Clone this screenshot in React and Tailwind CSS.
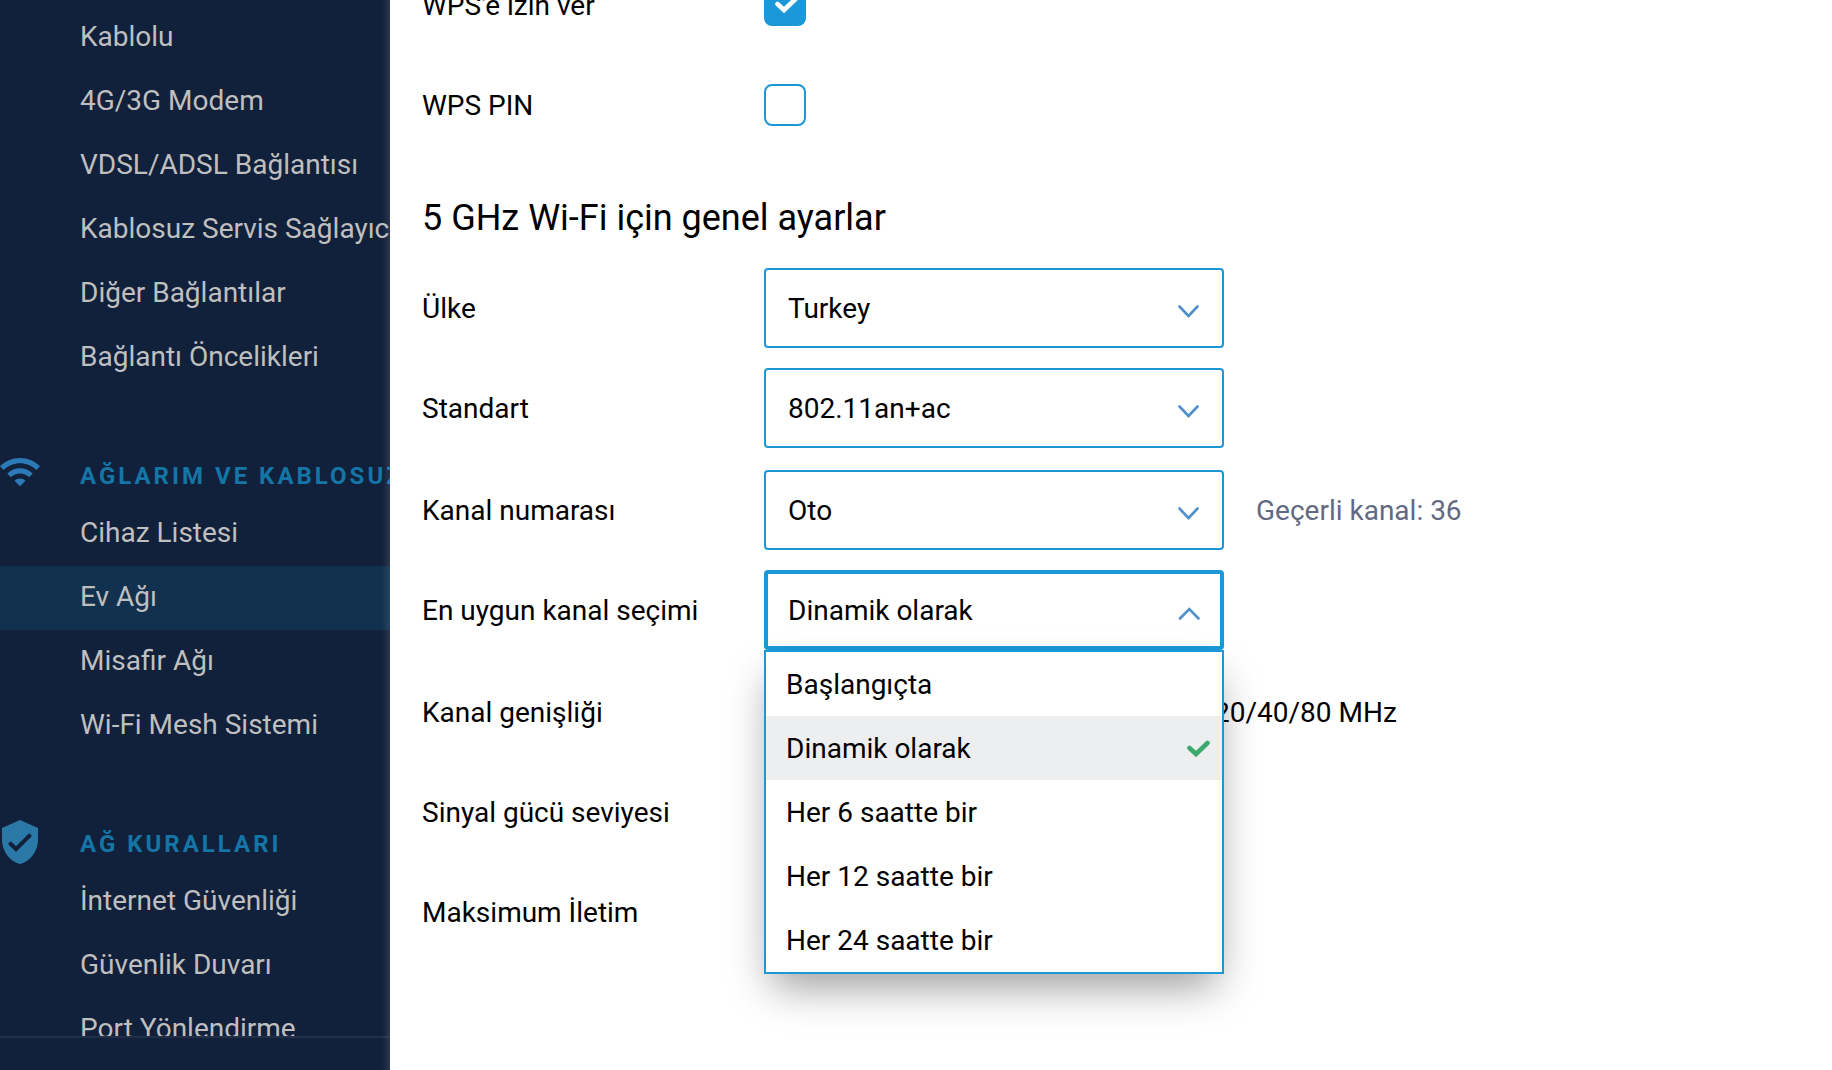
import React, { useState } from 'react';

const navSections = [
  {
    items: [
      'Kablolu',
      '4G/3G Modem',
      'VDSL/ADSL Bağlantısı',
      'Kablosuz Servis Sağlayıcı',
      'Diğer Bağlantılar',
      'Bağlantı Öncelikleri',
    ],
  },
  {
    title: 'AĞLARIM VE KABLOSUZ',
    icon: 'wifi',
    items: ['Cihaz Listesi', 'Ev Ağı', 'Misafir Ağı', 'Wi-Fi Mesh Sistemi'],
  },
  {
    title: 'AĞ KURALLARI',
    icon: 'shield',
    items: ['İnternet Güvenliği', 'Güvenlik Duvarı', 'Port Yönlendirme'],
  },
];

const channelOptions = [
  'Başlangıçta',
  'Dinamik olarak',
  'Her 6 saatte bir',
  'Her 12 saatte bir',
  'Her 24 saatte bir',
];

const WifiIcon = () => (
  <svg viewBox="1 4 22 19" className="w-10 h-[35px] text-[#2d7ab8]" fill="currentColor" aria-hidden="true">
    <path d="M1 9l2 2c4.97-4.97 13.03-4.97 18 0l2-2C16.93 2.93 7.08 2.93 1 9zm8 8l3 3 3-3c-1.65-1.66-4.34-1.66-6 0zm-4-4l2 2c2.76-2.76 7.24-2.76 10 0l2-2C15.14 9.14 8.87 9.14 5 13z" />
  </svg>
);

const ShieldIcon = () => (
  <svg viewBox="2 1 20 22" className="w-10 h-11 text-[#2a78a6]" fill="currentColor" aria-hidden="true">
    <path d="M12 1L3 5v6c0 5.55 3.84 10.74 9 12 5.16-1.26 9-6.45 9-12V5l-9-4zm-2 16l-4-4 1.41-1.41L10 14.17l6.59-6.59L18 9l-8 8z" />
  </svg>
);

const Chevron = ({ up }) => (
  <svg
    viewBox="0 0 22 14"
    className="absolute right-6 top-9 w-[22px] h-[14px] pointer-events-none"
    fill="none"
    stroke="#4f90cb"
    strokeWidth="2.6"
    strokeLinecap="round"
    aria-hidden="true"
  >
    <path d={up ? 'M2 12.5L11.300 3L20.500 12.5' : 'M1.500 2.500L10.500 12L19.500 2.500'} />
  </svg>
);

const CheckMark = ({ className }) => (
  <svg viewBox="0 0 24 18" className={className} fill="none" stroke="currentColor" strokeWidth="4.6" strokeLinecap="round" aria-hidden="true">
    <path d="M3.500 8L10 14L21.500 3" />
  </svg>
);

const Sidebar = () => (
  <aside className="relative flex flex-col w-[390px] shrink-0 overflow-hidden bg-[#12213b] text-[#bfbfbf]">
    <nav className="flex-1 min-h-0 overflow-hidden pt-1.5">
      {navSections.map((section) => (
        <section key={section.items[0]}>
          {section.title && (
            <div className="flex items-center h-28 pt-14">
              <div className="w-20 shrink-0">
                {section.icon === 'wifi' ? <WifiIcon /> : <ShieldIcon />}
              </div>
              <h3 className="text-2xl font-bold tracking-[3px] whitespace-nowrap text-[#1475a6] pt-1">
                {section.title}
              </h3>
            </div>
          )}
          <ul>
            {section.items.map((item) => (
              <li key={item}>
                <a
                  href="#"
                  className={`block h-16 pl-20 leading-[62px] whitespace-nowrap ${item === 'Ev Ağı' ? 'bg-[#11314f]' : ''}`}
                >
                  {item}
                </a>
              </li>
            ))}
          </ul>
        </section>
      ))}
    </nav>
    <div className="h-[34px] shrink-0 border-t-2 border-[#232f47]" />
    <div className="absolute inset-y-0 right-0 w-2 bg-linear-to-r from-transparent to-white/10 pointer-events-none" />
  </aside>
);

const Row = ({ label, id, children }) => (
  <div className="flex items-center h-[100px]">
    <label htmlFor={id} className="w-[342px] shrink-0 pt-0.5">
      {label}
    </label>
    {children}
  </div>
);

const Checkbox = ({ id, defaultChecked }) => (
  <div className="relative w-[42px] h-[42px]">
    <input
      id={id}
      type="checkbox"
      defaultChecked={defaultChecked}
      className="peer block w-[42px] h-[42px] appearance-none rounded-lg border-2 border-[#1a98d8] bg-white checked:bg-[#1a98d8]"
    />
    <CheckMark className="absolute top-3 left-2.5 w-6 h-[18px] text-white hidden peer-checked:block pointer-events-none" />
  </div>
);

const Select = ({ id, value }) => (
  <div className="relative w-[460px]">
    <select
      id={id}
      defaultValue={value}
      className="block w-full h-20 pt-0.5 pl-[22px] pr-16 appearance-none rounded border-2 border-[#1a98d8] bg-white"
    >
      <option>{value}</option>
    </select>
    <Chevron />
  </div>
);

const ChannelSelect = ({ id }) => {
  const [open, setOpen] = useState(true);
  const [selected, setSelected] = useState('Dinamik olarak');

  const choose = (option) => {
    setSelected(option);
    setOpen(false);
  };

  return (
    <div className="relative z-10 w-[460px]">
      <button
        id={id}
        type="button"
        aria-haspopup="listbox"
        aria-expanded={open}
        onClick={() => setOpen(!open)}
        className="block w-full h-20 pt-0.5 pl-5 text-left rounded border-4 border-[#1a98d8] bg-white"
      >
        {selected}
      </button>
      <Chevron up={open} />
      {open && (
        <ul
          role="listbox"
          className="absolute top-full left-0 w-full border-2 border-[#1a98d8] bg-white shadow-[0_20px_40px_-8px_rgba(0,0,0,0.4)]"
        >
          {channelOptions.map((option) => (
            <li
              key={option}
              role="option"
              aria-selected={option === selected}
              onClick={() => choose(option)}
              className={`flex items-center justify-between h-16 pt-0.5 pl-5 pr-3 ${option === selected ? 'bg-[#edeef0]' : ''}`}
            >
              {option}
              {option === selected && <CheckMark className="w-6 h-[18px] text-[#3dab6d]" />}
            </li>
          ))}
        </ul>
      )}
    </div>
  );
};

const App = () => {
  return (
    <div className="flex h-screen overflow-hidden bg-white font-['Roboto',sans-serif] text-[28px] leading-8 text-black">
      <Sidebar />
      <main className="flex-1 min-w-0 overflow-hidden pl-8">
        <form className="-mt-[45px]">
          <Row label="WPS'e izin ver" id="wps">
            <Checkbox id="wps" defaultChecked />
          </Row>
          <Row label="WPS PIN" id="pin">
            <Checkbox id="pin" />
          </Row>

          <h2 className="pt-[42px] pb-[18px] text-4xl leading-[43px]">5 GHz Wi-Fi için genel ayarlar</h2>

          <div className="flex flex-col gap-0.5">
            <div>
              <Row label="Ülke" id="country">
                <Select id="country" value="Turkey" />
              </Row>
              <Row label="Standart" id="standard">
                <Select id="standard" value="802.11an+ac" />
              </Row>
            </div>
            <div>
              <Row label="Kanal numarası" id="channel">
                <Select id="channel" value="Oto" />
                <span className="pt-0.5 pl-8 text-[#646982]">Geçerli kanal: 36</span>
              </Row>
              <Row label="En uygun kanal seçimi" id="optimal">
                <ChannelSelect id="optimal" />
              </Row>
            </div>
            <div>
              <Row label="Kanal genişliği">
                <span className="pt-0.5 pl-[450px]">20/40/80 MHz</span>
              </Row>
              <Row label="Sinyal gücü seviyesi" />
              <Row label="Maksimum İletim" />
            </div>
          </div>
        </form>
      </main>
    </div>
  );
};

export default App;
